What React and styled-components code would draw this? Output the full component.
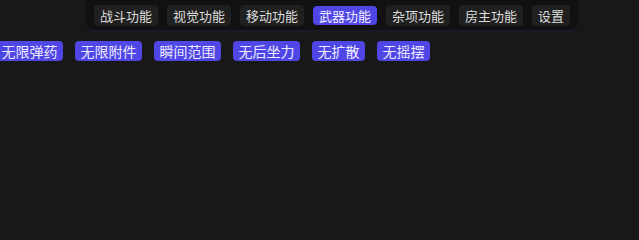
import React from "react";
import styled, { createGlobalStyle } from "styled-components";

const Global = createGlobalStyle`
  html, body { margin: 0; padding: 0; background: #181818; }
  body { font-family: "Noto Sans CJK SC", "Noto Sans", sans-serif; width: 639px; height: 223px; overflow: hidden; }
`;

const Page = styled.div`
  display: flex;
  flex-direction: column;
  align-items: flex-start;
  gap: 11px;
`;

const Bar = styled.nav`
  margin-left: 86px;
  display: flex;
  align-items: center;
  gap: 9px;
  height: 30px;
  padding: 0 8px;
  box-sizing: border-box;
  background: #111111;
  border-radius: 0 0 7px 7px;
  box-shadow: 0 2px 2px rgba(60, 50, 170, 0.12);
`;

const NavButton = styled.button`
  border: none;
  margin: 0;
  font-family: inherit;
  font-size: 13px;
  height: ${(p) => (p.$active ? "19px" : "21px")};
  line-height: ${(p) => (p.$active ? "19px" : "21px")};
  padding: 0 6px;
  border-radius: 4px;
  color: ${(p) => (p.$active ? "#f0efff" : "#dcdcdc")};
  background: ${(p) => (p.$active ? "#4f46e5" : "#202020")};
  cursor: pointer;
`;

const TagRow = styled.div`
  display: flex;
  gap: 12px;
  margin-left: -4px;
`;

const Tag = styled.span`
  display: inline-block;
  font-size: 14px;
  height: 20px;
  line-height: 20px;
  padding: 0 5.5px;
  border-radius: 4px;
  background: #4f46e5;
  color: #ecebff;
`;

const tabs = ["战斗功能", "视觉功能", "移动功能", "武器功能", "杂项功能", "房主功能", "设置"];
const tags = ["无限弹药", "无限附件", "瞬间范围", "无后坐力", "无扩散", "无摇摆"];

export default function App() {
  return (
    <>
      <Global />
      <Page>
        <Bar>
          {tabs.map((t) => (
            <NavButton key={t} $active={t === "武器功能"}>
              {t}
            </NavButton>
          ))}
        </Bar>
        <TagRow>
          {tags.map((t) => (
            <Tag key={t}>{t}</Tag>
          ))}
        </TagRow>
      </Page>
    </>
  );
}
